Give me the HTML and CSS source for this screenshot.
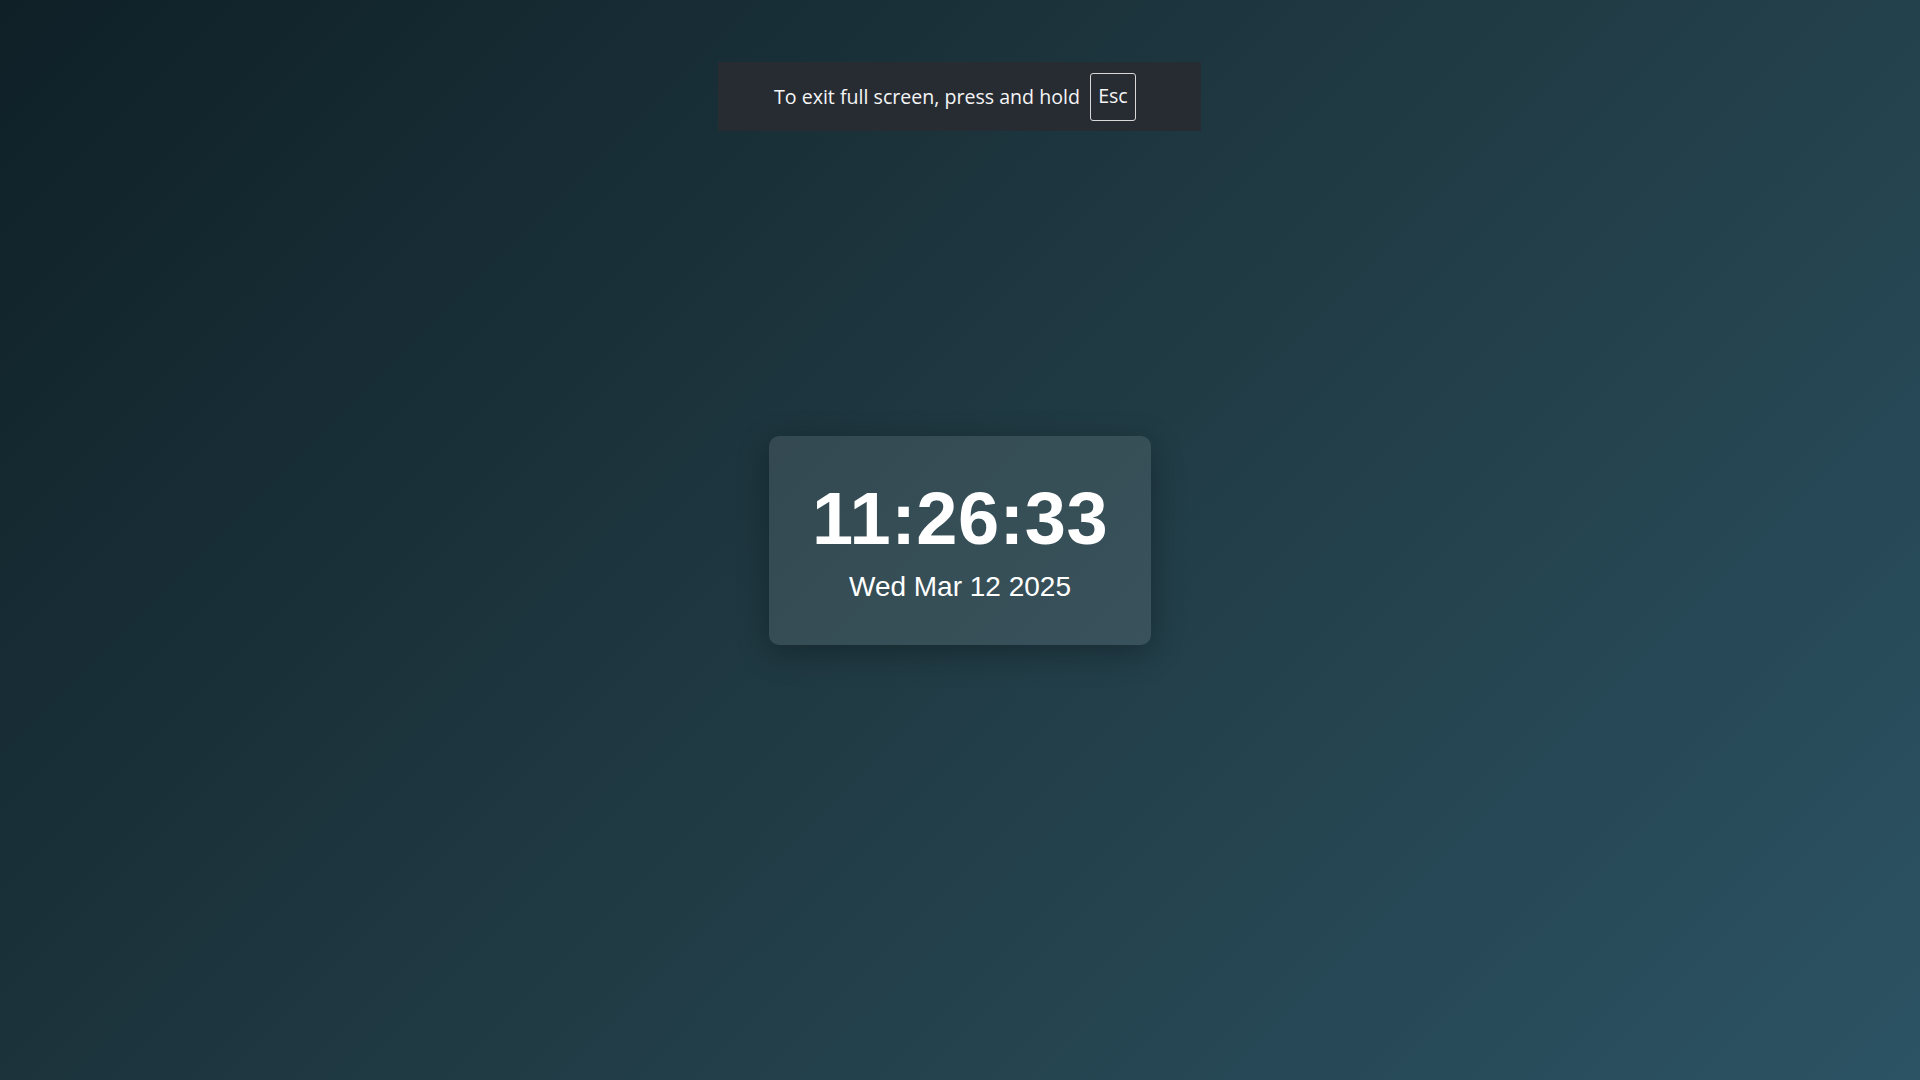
FILE: index.html
```html
<!DOCTYPE html>
<html lang="en">
<head>
<meta charset="utf-8">
<title>Clock</title>
<link rel="stylesheet" href="styles.css">
</head>
<body>
<main class="stage">
  <div class="clock-card">
    <div class="clock-time">11:26:33</div>
    <div class="clock-date">Wed Mar 12 2025</div>
  </div>
</main>
<div class="fs-toast">
  <span class="fs-toast-text">To exit full screen, press and hold</span>
  <span class="fs-key">Esc</span>
</div>
</body>
</html>
```
FILE: styles.css
```css
html, body {
  margin: 0;
  padding: 0;
  height: 100%;
}
body {
  background: linear-gradient(135deg, #0f2027 0%, #203a43 50%, #2c5364 100%);
  font-family: "Liberation Sans", Arial, sans-serif;
  color: #ffffff;
  overflow: hidden;
}
.stage {
  height: 100vh;
  display: flex;
  align-items: center;
  justify-content: center;
}
.clock-card {
  background: rgba(255, 255, 255, 0.1);
  border-radius: 10px;
  padding: 40px 43px 42px;
  box-shadow: 0 8px 32px rgba(0, 0, 0, 0.3);
  text-align: center;
}
.clock-time {
  font-size: 74px;
  font-weight: 700;
  letter-spacing: 0.5px;
}
.clock-date {
  font-size: 28px;
  margin-top: 10px;
}
.fs-toast {
  position: absolute;
  top: 62px;
  left: 718px;
  width: 483px;
  height: 69px;
  box-sizing: border-box;
  background: #272c33;
  display: flex;
  align-items: center;
  justify-content: flex-start;
  gap: 10px;
  padding-left: 56px;
  font-family: "Open Sans", "Noto Sans", sans-serif;
  font-size: 19.6px;
  color: #f5f5f5;
}
.fs-key {
  display: inline-flex;
  align-items: center;
  justify-content: center;
  width: 46px;
  height: 48px;
  box-sizing: border-box;
  border: 1.5px solid #d8d8d8;
  border-radius: 3px;
  padding-bottom: 2px;
}
```
